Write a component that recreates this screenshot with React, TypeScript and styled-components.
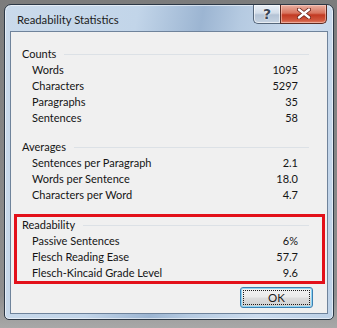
import styled, { createGlobalStyle } from 'styled-components'

type Stat = { label: string; value: string }

const counts: Stat[] = [
  { label: 'Words', value: '1095' },
  { label: 'Characters', value: '5297' },
  { label: 'Paragraphs', value: '35' },
  { label: 'Sentences', value: '58' },
]

const averages: Stat[] = [
  { label: 'Sentences per Paragraph', value: '2.1' },
  { label: 'Words per Sentence', value: '18.0' },
  { label: 'Characters per Word', value: '4.7' },
]

const readability: Stat[] = [
  { label: 'Passive Sentences', value: '6%' },
  { label: 'Flesch Reading Ease', value: '57.7' },
  { label: 'Flesch-Kincaid Grade Level', value: '9.6' },
]

const GlobalStyle = createGlobalStyle`
  html, body {
    margin: 0;
    padding: 0;
    background: linear-gradient(180deg, #7c7c7c 0%, #8e8e8e 90%, #a8a8a8 100%);
    font-family: Lato, 'Noto Sans', sans-serif;
    font-size: 11px;
  }
  #root {
    width: 337px;
    height: 328px;
    overflow: hidden;
  }
`

const Section = ({ title, stats }: { title: string; stats: Stat[] }) => (
  <>
    <Heading>{title}</Heading>
    {stats.map((s) => (
      <Row key={s.label}>
        <span>{s.label}</span>
        <Value>{s.value}</Value>
      </Row>
    ))}
  </>
)

export default function App() {
  return (
    <>
      <GlobalStyle />
      <Window>
        <TitleBar>
          <Title>Readability Statistics</Title>
          <CaptionGroup>
            <HelpButton>?</HelpButton>
            <CloseButton>
              <svg width="14" height="11" viewBox="0 0 14 11">
                <path d="M2 1.5 L12 9.5 M12 1.5 L2 9.5" stroke="#6a2218" strokeWidth="4" strokeLinecap="round" />
                <path d="M2 1.5 L12 9.5 M12 1.5 L2 9.5" stroke="#ffffff" strokeWidth="2.4" strokeLinecap="round" />
              </svg>
            </CloseButton>
          </CaptionGroup>
        </TitleBar>
        <Client>
          <Content>
            <Group>
              <Section title="Counts" stats={counts} />
            </Group>
            <Group>
              <Section title="Averages" stats={averages} />
            </Group>
            <Highlight>
              <Section title="Readability" stats={readability} />
            </Highlight>
          </Content>
          <Footer>
            <OkButton>
              <FocusRect>OK</FocusRect>
            </OkButton>
          </Footer>
        </Client>
      </Window>
    </>
  )
}

const Window = styled.div`
  box-sizing: border-box;
  margin: 4px 0 0 4px;
  width: 330px;
  height: 316px;
  border: 1px solid #2c3846;
  border-radius: 7px 7px 5px 5px;
  background: linear-gradient(
    100deg,
    #cadaeb 0%,
    #c2d5e9 35%,
    #9cb5d2 52%,
    #b5cae1 62%,
    #ccdcee 80%,
    #bdd1e7 100%
  );
  box-shadow: inset 0 0 0 1px rgba(255, 255, 255, 0.55);
  padding: 0 5px 5px 5px;
  display: flex;
  flex-direction: column;
`

const TitleBar = styled.div`
  height: 26px;
  display: flex;
  align-items: flex-start;
  padding-left: 7px;
`

const Title = styled.div`
  flex: 1;
  padding-top: 8px;
  color: #1b1b1b;
  font-size: 11.3px;
  line-height: 14px;
`

const CaptionGroup = styled.div`
  display: flex;
  margin-right: 1px;
  height: 19px;
`

const HelpButton = styled.div`
  box-sizing: border-box;
  width: 27px;
  height: 19px;
  border: 1px solid #55667a;
  border-top: none;
  border-right: none;
  border-radius: 0 0 0 5px;
  background: linear-gradient(180deg, #e9eff6 0%, #d3dde9 45%, #b4c3d5 55%, #c6d3e2 100%);
  box-shadow: inset 0 0 0 1px rgba(255, 255, 255, 0.6);
  color: #3a4656;
  font-family: 'DejaVu Sans', sans-serif;
  font-weight: bold;
  font-size: 14px;
  line-height: 18px;
  text-align: center;
  text-shadow: 0 0 2px #ffffff, 0 0 1px #ffffff;
`

const CloseButton = styled.div`
  box-sizing: border-box;
  width: 47px;
  height: 19px;
  border: 1px solid #5a2a22;
  border-top: none;
  border-radius: 0 0 5px 0;
  background: linear-gradient(180deg, #eab0a2 0%, #d8745e 45%, #c23a22 55%, #d0583e 85%, #e0806a 100%);
  box-shadow: inset 0 0 0 1px rgba(255, 220, 210, 0.5);
  display: flex;
  align-items: center;
  justify-content: center;
  padding-bottom: 1px;
`

const Client = styled.div`
  flex: 1;
  border: 1px solid #6f839b;
  background: #f0f0f0;
  display: flex;
  flex-direction: column;
`

const Content = styled.div`
  padding: 14px 18px 0 11px;
  color: #141414;
`

const Group = styled.div`
  margin-bottom: 13px;
`

const Highlight = styled.div`
  margin: -2px -16px 0 -8px;
  border: 3px solid #e3101a;
  padding: 0 13px 0 5px;
`

const Heading = styled.div`
  display: flex;
  align-items: center;
  height: 16px;
  line-height: 16px;
  &::after {
    content: '';
    flex: 1;
    height: 1px;
    margin-left: 8px;
    background: #dce1e6;
  }
`

const Row = styled.div`
  display: flex;
  justify-content: space-between;
  height: 16px;
  line-height: 16px;
  padding-left: 10px;
`

const Value = styled.span`
  padding-right: 11px;
`

const Footer = styled.div`
  display: flex;
  justify-content: flex-end;
  padding: 3px 14px 0 0;
`

const OkButton = styled.div`
  box-sizing: border-box;
  width: 73px;
  height: 21px;
  border: 1px solid #3c7fb1;
  border-radius: 3px;
  background: linear-gradient(180deg, #f2f2f2 0%, #ebebeb 48%, #dddddd 52%, #cfcfcf 100%);
  box-shadow: inset 0 0 0 1px #8fd6f5;
  padding: 2px;
  display: flex;
`

const FocusRect = styled.span`
  flex: 1;
  border: 1px dotted #1a1a1a;
  display: flex;
  align-items: center;
  justify-content: center;
  color: #1a1a1a;
  font-size: 11.5px;
`
